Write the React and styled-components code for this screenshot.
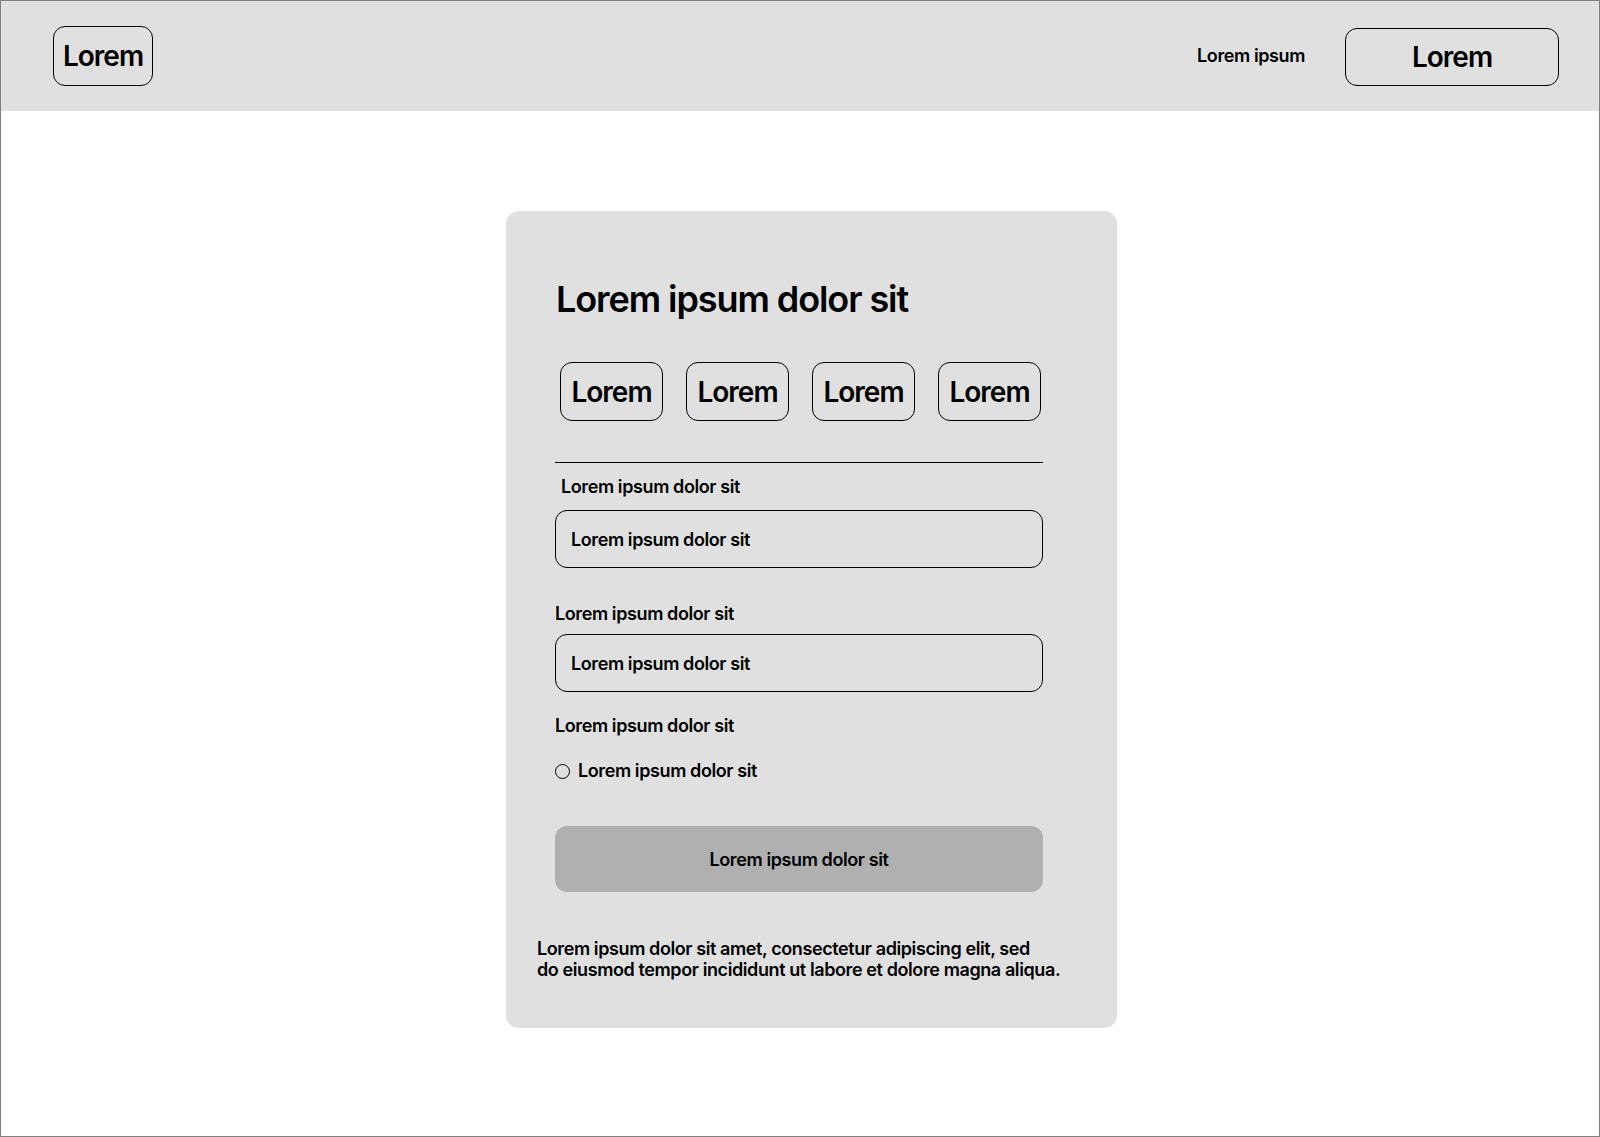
import React from "react";
import styled, { createGlobalStyle } from "styled-components";

const GlobalStyle = createGlobalStyle`
    html, body {
        margin: 0;
        padding: 0;
        background: #ffffff;
    }
    * {
        box-sizing: border-box;
    }
    body {
        font-family: Inter, "Noto Sans", sans-serif;
        color: #000;
        letter-spacing: -0.025em;
    }
`;

const Frame = styled.div`
    width: 1600px;
    height: 1137px;
    border: 1px solid #808080;
    background: #fff;
    overflow: hidden;
`;

const Header = styled.header`
    height: 110px;
    background: #e0e0e0;
    display: flex;
    align-items: center;
    justify-content: space-between;
    padding: 0 40px 0 52px;
`;

const Nav = styled.nav`
    display: flex;
    align-items: center;
    gap: 40px;
`;

const NavLink = styled.a`
    font-size: 18px;
    font-weight: 600;
    line-height: 22px;
    color: #000;
    text-decoration: none;
`;

const OutlineButton = styled.button`
    width: ${(p) => p.$w}px;
    height: ${(p) => p.$h}px;
    border: 1px solid #000;
    border-radius: 12px;
    background: transparent;
    font-family: inherit;
    font-size: 28px;
    font-weight: 600;
    letter-spacing: -0.035em;
    color: #000;
    padding: 0;
    display: flex;
    align-items: center;
    justify-content: center;
    margin-top: ${(p) => p.$mt || 0}px;
`;

const Main = styled.main`
    padding: 100px 0 0 505px;
`;

const Card = styled.section`
    width: 611px;
    height: 817px;
    background: #e0e0e0;
    border-radius: 13px;
    padding: 66px 74px 0 49px;
    display: flex;
    flex-direction: column;
`;

const Title = styled.h1`
    margin: 0 0 0 1px;
    font-size: 36px;
    line-height: 44px;
    font-weight: 600;
    letter-spacing: -0.03em;
`;

const Tabs = styled.div`
    display: flex;
    gap: 23px;
    margin: 41px 0 0 5px;
`;

const Divider = styled.hr`
    margin: 41px 0 0;
    border: none;
    height: 1px;
    background: #000;
    width: 488px;
`;

const Label = styled.label`
    display: block;
    font-size: 18px;
    line-height: 22px;
    font-weight: 600;
    margin-top: ${(p) => p.$mt}px;
    margin-left: ${(p) => p.$ml || 0}px;
`;

const Input = styled.div`
    height: 58px;
    border: 1px solid #000;
    border-radius: 12px;
    display: flex;
    align-items: center;
    padding-left: 15px;
    font-size: 18px;
    font-weight: 600;
    margin-top: ${(p) => p.$mt}px;
`;

const RadioRow = styled.div`
    display: flex;
    align-items: center;
    gap: 8px;
    margin-top: 23px;
    font-size: 18px;
    line-height: 22px;
    font-weight: 600;
`;

const RadioDot = styled.span`
    width: 15px;
    height: 15px;
    border: 1px solid #000;
    border-radius: 50%;
    flex-shrink: 0;
`;

const Submit = styled.button`
    margin-top: 44px;
    height: 66px;
    width: 488px;
    border: none;
    border-radius: 12px;
    background: #b0b0b0;
    font-family: inherit;
    font-size: 18px;
    font-weight: 600;
    letter-spacing: inherit;
    color: #000;
`;

const Note = styled.p`
    margin: 47px 0 0 -18px;
    font-size: 18px;
    line-height: 20.7px;
    font-weight: 600;
    white-space: nowrap;
`;

export default function App() {
    const tabs = ["Lorem", "Lorem", "Lorem", "Lorem"];
    return (
        <>
            <GlobalStyle />
            <Frame>
                <Header>
                    <OutlineButton $w={100} $h={60}>Lorem</OutlineButton>
                    <Nav>
                        <NavLink>Lorem ipsum</NavLink>
                        <OutlineButton $w={214} $h={58} $mt={2}>Lorem</OutlineButton>
                    </Nav>
                </Header>
                <Main>
                    <Card>
                        <Title>Lorem ipsum dolor sit</Title>
                        <Tabs>
                            {tabs.map((t, i) => (
                                <OutlineButton key={i} $w={103} $h={59}>{t}</OutlineButton>
                            ))}
                        </Tabs>
                        <Divider />
                        <Label $mt={13} $ml={6}>Lorem ipsum dolor sit</Label>
                        <Input $mt={12}>Lorem ipsum dolor sit</Input>
                        <Label $mt={35}>Lorem ipsum dolor sit</Label>
                        <Input $mt={9}>Lorem ipsum dolor sit</Input>
                        <Label $mt={23}>Lorem ipsum dolor sit</Label>
                        <RadioRow>
                            <RadioDot />
                            Lorem ipsum dolor sit
                        </RadioRow>
                        <Submit>Lorem ipsum dolor sit</Submit>
                        <Note>
                            Lorem ipsum dolor sit amet, consectetur adipiscing elit, sed
                            <br />
                            do eiusmod tempor incididunt ut labore et dolore magna aliqua.
                        </Note>
                    </Card>
                </Main>
            </Frame>
        </>
    );
}
